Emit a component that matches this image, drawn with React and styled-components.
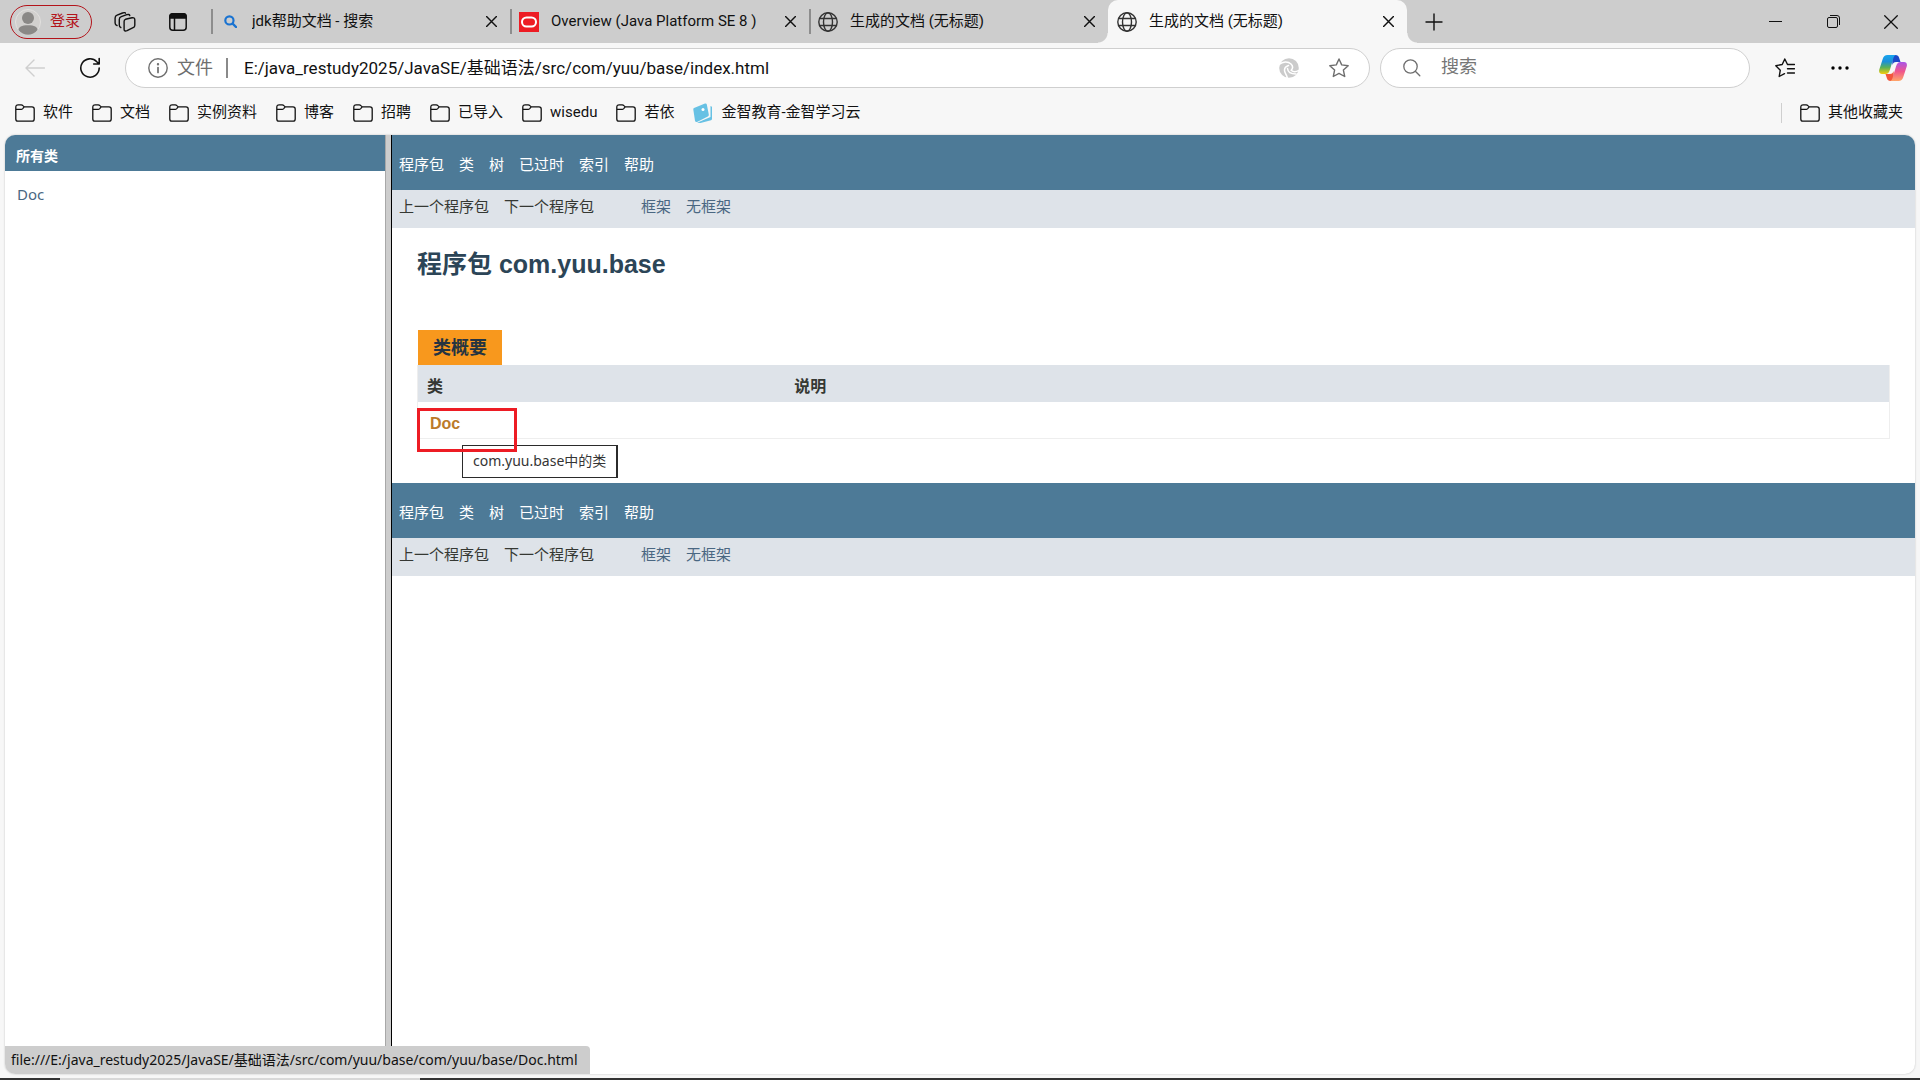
import React from "react";
import styled, { createGlobalStyle, css } from "styled-components";

const uiFont = `Roboto, "Noto Sans CJK SC", sans-serif`;
const humanistFont = `"Noto Sans", "Noto Sans CJK SC", sans-serif`;
const docFont = `"Liberation Sans", "Noto Sans CJK SC", sans-serif`;

const GlobalStyle = createGlobalStyle`
  * { box-sizing: border-box; }
  body { margin: 0; font-family: ${uiFont}; color: #111; background: #f7f7f7; }
  button { border: 0; padding: 0; margin: 0; background: none; font: inherit; color: inherit; }
  a { color: inherit; text-decoration: none; }
  svg { display: block; flex: none; }
`;

const Window = styled.div`
  display: flex;
  flex-direction: column;
  height: 100vh;
  overflow: hidden;
  background: #f7f7f7;
`;

const TabBar = styled.header`
  display: flex;
  align-items: center;
  height: 43px;
  flex: none;
  background: #cdcdcd;
`;

const Tools = styled.div`
  display: flex;
  align-items: center;
  gap: 13px;
  padding: 0 13px 0 10px;
`;

const Profile = styled.button`
  display: flex;
  align-items: center;
  gap: 9px;
  width: 82px;
  height: 34px;
  padding: 0 4px;
  border: 1px solid #b3141b;
  border-radius: 17px;
  color: #b3141b;
  font-size: 15px;
  line-height: 20px;
`;

const ProfileName = styled.span`
  padding-bottom: 2px;
`;

const IconButton = styled.button`
  display: grid;
  place-items: center;
  flex: none;
  width: ${(p) => p.$width || 40}px;
  height: 40px;
`;

const TabItem = styled.div`
  position: relative;
  display: flex;
  align-items: center;
  flex: 0 1 299px;
  height: 43px;
  padding: 0 11px 0 0;
  font-size: 15px;
  line-height: 20px;
  &::before {
    content: "";
    width: 2px;
    height: 25px;
    margin-right: 7px;
    background: ${(p) => (p.$active ? "transparent" : "#8d8d8d")};
  }
  ${(p) =>
    p.$active &&
    css`
      background: #f7f7f7;
      border-radius: 10px 10px 0 0;
    `}
`;

const Flare = styled.span`
  position: absolute;
  bottom: 0;
  ${(p) => p.$side}: -10px;
  width: 10px;
  height: 10px;
  background: radial-gradient(
    circle at ${(p) => (p.$side === "left" ? "0 0" : "100% 0")},
    transparent 9px,
    #f7f7f7 10px
  );
`;

const TabTitle = styled.span`
  flex: 1;
  margin-left: 12px;
  padding-bottom: 2px;
  white-space: nowrap;
  overflow: hidden;
`;

const TabIcon = styled.span`
  display: grid;
  place-items: center;
  width: 20px;
  height: 20px;
`;

const CloseButton = styled.button`
  display: grid;
  place-items: center;
  width: 16px;
  height: 20px;
`;

const NewTab = styled(IconButton)`
  margin-left: 7px;
`;

const WindowControls = styled.div`
  display: flex;
  margin-left: auto;
`;

const Toolbar = styled.div`
  display: flex;
  align-items: center;
  gap: 15px;
  flex: none;
  height: 50px;
  padding: 0 9px 0 15px;
`;

const Fields = styled.div`
  display: flex;
  gap: 10px;
  flex: 1;
`;

const Field = styled.label`
  display: flex;
  align-items: center;
  flex: ${(p) => (p.$grow ? "1" : "0 0 370px")};
  height: 40px;
  padding: 0 20px 0 22px;
  border: 1px solid #cfcfcf;
  border-radius: 20px;
  background: #fff;
  color: #6e6e6e;
  font-size: 18px;
  line-height: 24px;
`;

const Scheme = styled.span`
  margin-left: 9px;
  padding-right: 13px;
  border-right: 2px solid #8a8a8a;
  line-height: 20px;
`;

const TextInput = styled.input`
  flex: 1;
  min-width: 0;
  height: 30px;
  margin-left: ${(p) => p.$indent}px;
  padding: 0 0 3px;
  border: 0;
  outline: 0;
  background: none;
  color: #111;
  font-family: ${uiFont};
  font-size: ${(p) => p.$size}px;
  &::placeholder { color: #767676; opacity: 1; }
`;

const FieldAction = styled.button`
  display: grid;
  place-items: center;
  width: 20px;
  height: 30px;
  margin-left: 30px;
`;

const Bookmarks = styled.nav`
  display: flex;
  align-items: center;
  gap: 19px;
  flex: none;
  height: 42px;
  padding: 0 17px 2px 15px;
`;

const Bookmark = styled.a`
  display: flex;
  align-items: center;
  gap: 8px;
  font-size: 15px;
  line-height: 20px;
  white-space: nowrap;
`;

const BookmarkName = styled.span`
  padding-bottom: 2px;
`;

const OtherBookmarks = styled.div`
  display: flex;
  align-items: center;
  margin-left: auto;
  gap: 18px;
  &::before {
    content: "";
    width: 1px;
    height: 20px;
    background: #cfcfcf;
  }
`;

const Viewport = styled.div`
  position: relative;
  display: flex;
  flex: 1;
  min-height: 0;
  margin: 0 5px 4px;
  border-radius: 10px;
  overflow: hidden;
  background: #fff;
  box-shadow: 0 0 2px #bbb;
`;

const ClassList = styled.aside`
  flex: 0 0 20%;
  max-width: 380px;
  color: #4a6782;
`;

const ClassListTitle = styled.h1`
  margin: 0;
  height: 36px;
  padding: 11px 11px 5px;
  background: #4d7a97;
  color: #fff;
  font-size: 14px;
  line-height: 20px;
`;

const ClassListLink = styled.a`
  display: block;
  padding: 13px 12px;
  font-family: ${humanistFont};
  font-size: 15px;
  line-height: 20px;
`;

const Splitter = styled.div`
  flex: 0 0 7px;
  border-left: 1px solid #a8a8a8;
  border-right: 1px solid #000;
  background: #cdcdcd;
`;

const Content = styled.main`
  flex: 1;
  min-width: 0;
  color: #353833;
`;

const TopNav = styled.nav`
  display: flex;
  align-items: center;
  gap: 15px;
  height: 55px;
  padding: 4px 7px 0;
  background: #4d7a97;
  color: #fff;
  font-size: 15px;
  line-height: 20px;
`;

const SubNav = styled.div`
  display: flex;
  gap: 15px;
  height: 38px;
  padding: 7px;
  background: #dee3e9;
  font-size: 15px;
  line-height: 20px;
`;

const FrameLinks = styled.div`
  display: flex;
  gap: 15px;
  margin-left: 32px;
  color: #4a6782;
`;

const Title = styled.h2`
  margin: 0;
  padding: 21px 25px 51px;
  color: #2c4557;
  font-family: ${docFont};
  font-size: 25px;
  line-height: 30px;
`;

const Summary = styled.section`
  padding: 0 25px 44px;
`;

const SummaryTable = styled.table`
  width: 100%;
  border-collapse: separate;
  border-spacing: 0;
  table-layout: fixed;
  font-family: ${docFont};
  font-size: 16px;
  line-height: 20px;
  text-align: left;
  caption {
    text-align: left;
    padding-left: 1px;
  }
  th {
    height: 37px;
    padding: 7px 9px 0;
    background: #dee3e9;
  }
  td {
    height: 37px;
    padding: 8px 12px 0;
    border-bottom: 1px solid #eee;
    color: #bb7a2a;
    font-weight: 700;
  }
  th:first-child, td:first-child { width: 25%; border-left: 1px solid #eee; }
  th:last-child, td:last-child { border-right: 1px solid #eee; }
`;

const CaptionLabel = styled.span`
  display: inline-block;
  height: 35px;
  padding: 8px 15px;
  vertical-align: top;
  background: #f8981d;
  color: #253441;
  font-size: 18px;
  font-weight: 700;
  line-height: 20px;
`;

const LinkAnchor = styled.div`
  position: relative;
`;

const Highlight = styled.div`
  position: absolute;
  top: -6px;
  left: -13px;
  width: 100px;
  height: 44px;
  border: 3px solid #ed1c24;
`;

const Tooltip = styled.div`
  position: absolute;
  top: 31px;
  left: 32px;
  padding: 5px 10px 6px;
  border: 1px solid #2b2b2b;
  border-right-width: 2px;
  background: #fff;
  color: #353535;
  font-family: ${humanistFont};
  font-size: 14px;
  font-weight: 400;
  line-height: 20px;
  white-space: nowrap;
`;

const Status = styled.div`
  position: absolute;
  left: 0;
  bottom: 0;
  padding: 4px 12px 4px 6px;
  border-radius: 0 4px 0 0;
  background: #cdcdcd;
  font-family: ${humanistFont};
  font-size: 14px;
  line-height: 20px;
  white-space: nowrap;
`;

const Taskbar = styled.div`
  flex: none;
  height: 2px;
  background: linear-gradient(90deg, #333 60px, #d8d8d8 60px, #d8d8d8 420px, #333 420px);
`;

const line = { fill: "none", stroke: "currentColor", strokeWidth: 1.4, strokeLinecap: "round", strokeLinejoin: "round" };

const Avatar = () => (
  <svg width="26" height="26" viewBox="0 0 26 26">
    <circle cx="13" cy="13" r="12.5" fill="#d2d0ce" stroke="#e2e0de" />
    <circle cx="13" cy="9" r="6" fill="#8a8886" />
    <path d="M3.5 21c0-3 3-4.700 9.500-4.700s9.500 1.700 9.500 4.700a12 12 0 0 1-19 0Z" fill="#8a8886" />
  </svg>
);
const WorkspacesIcon = () => (
  <svg width="22" height="20" viewBox="0 0 22 20" {...line}>
    <path d="M11.500 7.300 18 5.800q2.800-.5 2.800 2v5.400q0 1.800-1.700 2.500l-6 3q-3 1.100-3-1.500V9.500q0-1.700 1.400-2.200Z" />
    <path d="M6.800 15.500q-1.500-.5-1.500-2.500V7.500q0-2 2-2.800l5.500-2q2.500-.8 3 .8M3 13.500q-1.900-.5-1.900-2.500V6q0-2 2-2.800L8.500 1q2.500-.8 3 .2" />
  </svg>
);
const TabActionsIcon = () => (
  <svg width="18" height="18" viewBox="0 0 18 18" {...line} strokeWidth="1.5">
    <rect x=".8" y=".8" width="16.400" height="16.400" rx="3" />
    <path d="M1 3.500Q1 .8 4 .8h10q3 0 3 2.700v1.500H1Z" fill="currentColor" />
    <path d="M5.500 5v12" />
  </svg>
);
const SearchIcon = ({ color = "#6e6e6e", size = 18, weight = 1.3 }) => (
  <svg width={size} height={size} viewBox="0 0 18 18" fill="none" stroke={color} strokeWidth={weight} strokeLinecap="round">
    <circle cx="7.500" cy="7.500" r={weight > 2 ? 5.7 : 6.7} />
    <path d="m12.300 12.300 4.500 4.500" />
  </svg>
);
const OracleIcon = () => (
  <svg width="20" height="20" viewBox="0 0 20 20">
    <path d="M0 0h20v20H0Z" fill="#ed1c24" />
    <rect x="3" y="5.500" width="14" height="9" rx="4.500" fill="none" stroke="#fff" strokeWidth="2" />
  </svg>
);
const GlobeIcon = () => (
  <svg width="20" height="20" viewBox="0 0 20 20" fill="none" stroke="#333" strokeWidth="1.4">
    <circle cx="10" cy="10" r="9.200" />
    <ellipse cx="10" cy="10" rx="4.500" ry="9.200" />
    <path d="M1.600 6.500h16.800M1.600 13.500h16.800" />
  </svg>
);
const CloseIcon = ({ size = 11, weight = 1.3 }) => (
  <svg width={size} height={size} viewBox="0 0 10 10" {...line} strokeWidth={weight}>
    <path d="m.5.5 9 9m0-9-9 9" />
  </svg>
);
const PlusIcon = () => (
  <svg width="18" height="18" viewBox="0 0 18 18" {...line}><path d="M9 1v16M1 9h16" /></svg>
);
const MinimizeIcon = () => (
  <svg width="13" height="13" viewBox="0 0 13 13" fill="none" stroke="currentColor"><path d="M0 6.500h13" /></svg>
);
const RestoreIcon = () => (
  <svg width="13" height="13" viewBox="0 0 13 13" fill="none" stroke="currentColor">
    <rect x=".5" y="2.500" width="10" height="10" rx="1.500" />
    <path d="M3 .5h7q2.500 0 2.500 2.500v7" />
  </svg>
);
const BackIcon = () => (
  <svg width="20" height="18" viewBox="0 0 20 18" {...line} stroke="#cfcfcf"><path d="M19.500 9H1m8-8L1 9l8 8" /></svg>
);
const ReloadIcon = () => (
  <svg width="22" height="22" viewBox="0 0 22 22" {...line} strokeWidth="1.6">
    <path d="M20.200 11A9.200 9.200 0 1 1 17.800 4.800L20 7M20.200 1.500V7h-5.500" />
  </svg>
);
const InfoIcon = () => (
  <svg width="20" height="20" viewBox="0 0 20 20" {...line}>
    <circle cx="10" cy="10" r="9.200" />
    <path d="M10 9.500v5" strokeWidth="1.700" />
    <circle cx="10" cy="6.300" r=".5" fill="currentColor" />
  </svg>
);
const SwirlIcon = () => (
  <svg width="20" height="20" viewBox="0 0 20 20">
    <circle cx="10" cy="10" r="9.800" fill="#cbcbcb" />
    <g fill="none" stroke="#fff" strokeWidth="1.500" strokeLinecap="round">
      <path d="M.2 6.500C3.500 3.500 9 3.200 12 6c2 2 1.800 4.500.2 6.200 1.800 1.800 4.800 1.800 7.300.5" />
      <path d="M9.500 7.500C6.500 8.500 5 11 5.800 13.800c.6 2 2 3.200 2.400 5.800" />
      <path d="M8.500 10.500c.3 3.300 3 5.500 8.500 5.500" />
    </g>
  </svg>
);
const star = "M10 1l2.700 5.900 6.500.8-4.800 4.400 1.300 6.400-5.700-3.100-5.700 3.100 1.300-6.400L.8 7.700l6.500-.8Z";
const StarIcon = () => <svg width="20" height="20" viewBox="0 0 20 20" {...line}><path d={star} /></svg>;
const FavoritesIcon = () => (
  <svg width="20" height="20" viewBox="0 0 20 20" {...line}>
    <path d="M12.500 6.500 9.800 1 7.200 6.500.8 7.700l4.500 4.500-1.100 6.300L9.500 15.700M12.500 6.500h7M12.500 10.700h7M12.500 15h7" />
  </svg>
);
const MoreIcon = () => (
  <svg width="18" height="4" viewBox="0 0 18 4"><circle cx="2" cy="2" r="1.700" /><circle cx="9" cy="2" r="1.700" /><circle cx="16" cy="2" r="1.700" /></svg>
);
const CopilotIcon = () => (
  <svg width="28" height="26" viewBox="0 0 28 26">
    <defs>
      <linearGradient id="cpA" x1="0" y1="0" x2="0" y2="1"><stop offset="0" stopColor="#18a5ee" /><stop offset=".35" stopColor="#1c8fd9" /><stop offset=".65" stopColor="#58b05a" /><stop offset="1" stopColor="#f5cc0c" /></linearGradient>
      <linearGradient id="cpB" x1="0" y1="0" x2="0" y2="1"><stop offset="0" stopColor="#a855e8" /><stop offset=".5" stopColor="#f0568c" /><stop offset="1" stopColor="#ffa668" /></linearGradient>
    </defs>
    <path d="M13 0h3.500c2 0 3 .8 3.600 2.700L21.500 7H17c-2 0-3 1-3.600 3Z" fill="#1b49c8" />
    <path d="M15 26h-3.500c-2 0-3-.8-3.600-2.700L6.500 19H11c2 0 3-1 3.600-3Z" fill="#f2553c" />
    <path d="M8.500 0H17c-1.700.4-2.300 2-3 4.500l-3 10c-1 3-2 4.500-4.500 4.500H3c-2.500 0-3.400-2-2.700-4.500L3.700 4C4.500 1.500 6 0 8.500 0Z" fill="url(#cpA)" />
    <path d="M19.500 26H11c1.700-.4 2.300-2 3-4.500l3-10c1-3 2-4.500 4.500-4.500H25c2.500 0 3.400 2 2.700 4.500L24.300 22c-.8 2.500-2.300 4-4.800 4Z" fill="url(#cpB)" />
  </svg>
);
const FolderIcon = () => (
  <svg width="20" height="18" viewBox="0 0 20 18" {...line} strokeWidth="1.3">
    <path d="M.8 3.200Q.8.800 3.200.8h3q1 0 1.700.8l1.300 1.300H17q2.200 0 2.200 2.200v9.800q0 2.200-2.200 2.200H3Q.8 17.100.8 14.900ZM.8 5.300h5.400q.8 0 1.500-.7l1.500-1.700" />
  </svg>
);
const BookIcon = () => (
  <svg width="20" height="20" viewBox="0 0 20 20">
    <path d="m1 5 11-4.500q1.500-.5 1.800 1l2 10q.2 1.500-1 2L4 19q-1.600.3-2-1.200L.3 6.500Q.2 5.400 1 5Z" fill="#67c1e4" />
    <path d="M4 19.800 17.500 14V3l1.500.7v12q0 1-1 1.500L7.500 20Z" fill="#67c1e4" />
    <circle cx="10" cy="6.500" r="1.500" fill="#fff" />
  </svg>
);

const tabs = [
  { title: "jdk帮助文档 - 搜索", icon: <SearchIcon color="#1a73d1" size={13} weight={3} /> },
  { title: "Overview (Java Platform SE 8 )", icon: <OracleIcon /> },
  { title: "生成的文档 (无标题)", icon: <GlobeIcon /> },
  { title: "生成的文档 (无标题)", icon: <GlobeIcon />, active: true },
];

const folders = ["软件", "文档", "实例资料", "博客", "招聘", "已导入", "wisedu", "若依"];
const navItems = ["程序包", "类", "树", "已过时", "索引", "帮助"];

const DocNav = () => (
  <>
    <TopNav>
      {navItems.map((item) => (
        <a key={item} href="#nav">{item}</a>
      ))}
    </TopNav>
    <SubNav>
      <span>上一个程序包</span>
      <span>下一个程序包</span>
      <FrameLinks>
        <a href="#frames">框架</a>
        <a href="#noframes">无框架</a>
      </FrameLinks>
    </SubNav>
  </>
);

export default function App() {
  return (
    <Window>
      <GlobalStyle />
      <TabBar>
        <Tools>
          <Profile><Avatar /><ProfileName>登录</ProfileName></Profile>
          <IconButton aria-label="工作区"><WorkspacesIcon /></IconButton>
          <IconButton aria-label="标签操作"><TabActionsIcon /></IconButton>
        </Tools>
        {tabs.map((tab, i) => (
          <TabItem key={i} $active={tab.active}>
            <TabIcon>{tab.icon}</TabIcon>
            <TabTitle>{tab.title}</TabTitle>
            <CloseButton aria-label="关闭标签页"><CloseIcon /></CloseButton>
            {tab.active && <><Flare $side="left" /><Flare $side="right" /></>}
          </TabItem>
        ))}
        <NewTab aria-label="新建标签页"><PlusIcon /></NewTab>
        <WindowControls>
          <IconButton $width={58} aria-label="最小化"><MinimizeIcon /></IconButton>
          <IconButton $width={58} aria-label="还原"><RestoreIcon /></IconButton>
          <IconButton $width={58} aria-label="关闭"><CloseIcon size={14} weight={0.9} /></IconButton>
        </WindowControls>
      </TabBar>

      <Toolbar>
        <IconButton aria-label="后退"><BackIcon /></IconButton>
        <IconButton aria-label="刷新"><ReloadIcon /></IconButton>
        <Fields>
          <Field $grow>
            <InfoIcon />
            <Scheme>文件</Scheme>
            <TextInput $size={17} $indent={16} aria-label="地址" defaultValue="E:/java_restudy2025/JavaSE/基础语法/src/com/yuu/base/index.html" />
            <FieldAction aria-label="Copilot"><SwirlIcon /></FieldAction>
            <FieldAction aria-label="收藏"><StarIcon /></FieldAction>
          </Field>
          <Field>
            <SearchIcon />
            <TextInput $size={18} $indent={20} aria-label="搜索" placeholder="搜索" />
          </Field>
        </Fields>
        <IconButton aria-label="收藏夹"><FavoritesIcon /></IconButton>
        <IconButton aria-label="更多"><MoreIcon /></IconButton>
        <IconButton $width={36} aria-label="Copilot"><CopilotIcon /></IconButton>
      </Toolbar>

      <Bookmarks>
        {folders.map((name) => (
          <Bookmark key={name} href="#folder"><FolderIcon /><BookmarkName>{name}</BookmarkName></Bookmark>
        ))}
        <Bookmark href="#wisedu"><BookIcon /><BookmarkName>金智教育-金智学习云</BookmarkName></Bookmark>
        <OtherBookmarks>
          <Bookmark href="#other"><FolderIcon /><BookmarkName>其他收藏夹</BookmarkName></Bookmark>
        </OtherBookmarks>
      </Bookmarks>

      <Viewport>
        <ClassList>
          <ClassListTitle>所有类</ClassListTitle>
          <ClassListLink href="#Doc">Doc</ClassListLink>
        </ClassList>
        <Splitter />
        <Content>
          <DocNav />
          <Title>程序包 com.yuu.base</Title>
          <Summary>
            <SummaryTable>
              <caption><CaptionLabel>类概要</CaptionLabel></caption>
              <thead>
                <tr><th scope="col">类</th><th scope="col">说明</th></tr>
              </thead>
              <tbody>
                <tr>
                  <td>
                    <LinkAnchor>
                      <a href="#Doc">Doc</a>
                      <Tooltip role="tooltip">com.yuu.base中的类</Tooltip>
                      <Highlight />
                    </LinkAnchor>
                  </td>
                  <td />
                </tr>
              </tbody>
            </SummaryTable>
          </Summary>
          <DocNav />
        </Content>
        <Status>file:///E:/java_restudy2025/JavaSE/基础语法/src/com/yuu/base/com/yuu/base/Doc.html</Status>
      </Viewport>
      <Taskbar />
    </Window>
  );
}
